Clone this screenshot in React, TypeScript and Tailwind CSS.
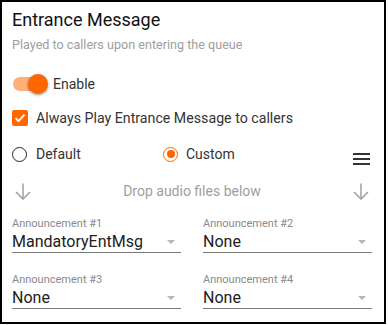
import React from "react";

function DownArrow() {
  return (
    <svg width="16" height="17" viewBox="0 0 16 17" fill="none">
      <path d="M8 0.5V16" stroke="#9e9e9e" strokeWidth="1.5" />
      <path d="M1 9l7 7 7-7" stroke="#9e9e9e" strokeWidth="1.5" />
    </svg>
  );
}

function Field({ label, value }: { label: string; value: string }) {
  return (
    <div className="flex flex-col border-b border-[#7a7a7a]">
      <div className="h-[14px] leading-[14px] text-[11px] text-[#8a8a8a]">{label}</div>
      <div className="mt-[1px] h-[20px] flex items-center justify-between">
        <span className="text-[16px] leading-[20px] text-[#212121]">{value}</span>
        <span className="mr-[6px] w-0 h-0 border-l-[4px] border-r-[4px] border-t-[4px] border-l-transparent border-r-transparent border-t-[#b5b5b5]" />
      </div>
    </div>
  );
}

export default function App() {
  return (
    <div
      className="w-[386px] h-[324px] border-2 border-black bg-white pl-[10px] pt-[6px] text-[#212121]"
      style={{ fontFamily: "Roboto, 'Liberation Sans', sans-serif" }}
    >
      <div className="w-[360px] flex flex-col">
        <div className="h-[24px] leading-[24px] text-[18px] text-[#111]">Entrance Message</div>
        <div className="mt-[3px] h-[20px] leading-[20px] text-[12.6px] text-[#9e9e9e]">
          Played to callers upon entering the queue
        </div>

        {/* Toggle */}
        <div className="mt-[17px] h-[24px] flex items-center">
          <div className="relative ml-[1px] w-[33px] h-[20px] flex items-center">
            <div className="w-[30px] h-[14px] rounded-full bg-[#ffb07a]" />
            <div className="absolute left-[15px] top-0 w-[20px] h-[20px] rounded-full bg-[#ff6600] shadow-[0_1px_3px_rgba(0,0,0,0.45)]" />
          </div>
          <span className="ml-[7px] text-[14px] leading-[20px] text-[#333]">Enable</span>
        </div>

        {/* Checkbox */}
        <div className="mt-[10px] h-[24px] flex items-center">
          <div className="w-[16px] h-[16px] rounded-[2px] bg-[#ff6600] flex items-center justify-center">
            <svg width="12" height="12" viewBox="0 0 12 12" fill="none">
              <path d="M1.5 6.2l3 3 6-6.5" stroke="white" strokeWidth="1.8" />
            </svg>
          </div>
          <span className="ml-[8px] text-[14.2px] leading-[20px] text-[#333]">
            Always Play Entrance Message to callers
          </span>
        </div>

        {/* Radios */}
        <div className="mt-[12px] h-[24px] flex items-start">
          <div className="w-[151px] h-[24px] flex items-center">
            <div className="w-[15px] h-[15px] rounded-full border-[1.5px] border-[#222]" />
            <span className="ml-[9px] text-[14px] leading-[20px] text-[#333]">Default</span>
          </div>
          <div className="h-[24px] flex items-center">
            <div className="w-[15px] h-[15px] rounded-full border-[1.5px] border-[#ff6600] flex items-center justify-center">
              <div className="w-[8px] h-[8px] rounded-full bg-[#ff6600]" />
            </div>
            <span className="ml-[8px] text-[14px] leading-[20px] text-[#333]">Custom</span>
          </div>
          <div className="ml-auto mr-[2px] mt-[11px] flex flex-col gap-[3px]">
            <div className="w-[17px] h-[2px] bg-[#333]" />
            <div className="w-[17px] h-[2px] bg-[#333]" />
            <div className="w-[17px] h-[2px] bg-[#333]" />
          </div>
        </div>

        {/* Drop row */}
        <div className="mt-[14px] h-[22px] flex items-center px-[3px]">
          <DownArrow />
          <span className="flex-1 text-center text-[14px] leading-[20px] text-[#9e9e9e]">
            Drop audio files below
          </span>
          <DownArrow />
        </div>

        {/* Fields */}
        <div className="mt-[15px] grid grid-cols-2 gap-x-[22px] gap-y-[20px]">
          <Field label="Announcement #1" value="MandatoryEntMsg" />
          <Field label="Announcement #2" value="None" />
          <Field label="Announcement #3" value="None" />
          <Field label="Announcement #4" value="None" />
        </div>
      </div>
    </div>
  );
}
